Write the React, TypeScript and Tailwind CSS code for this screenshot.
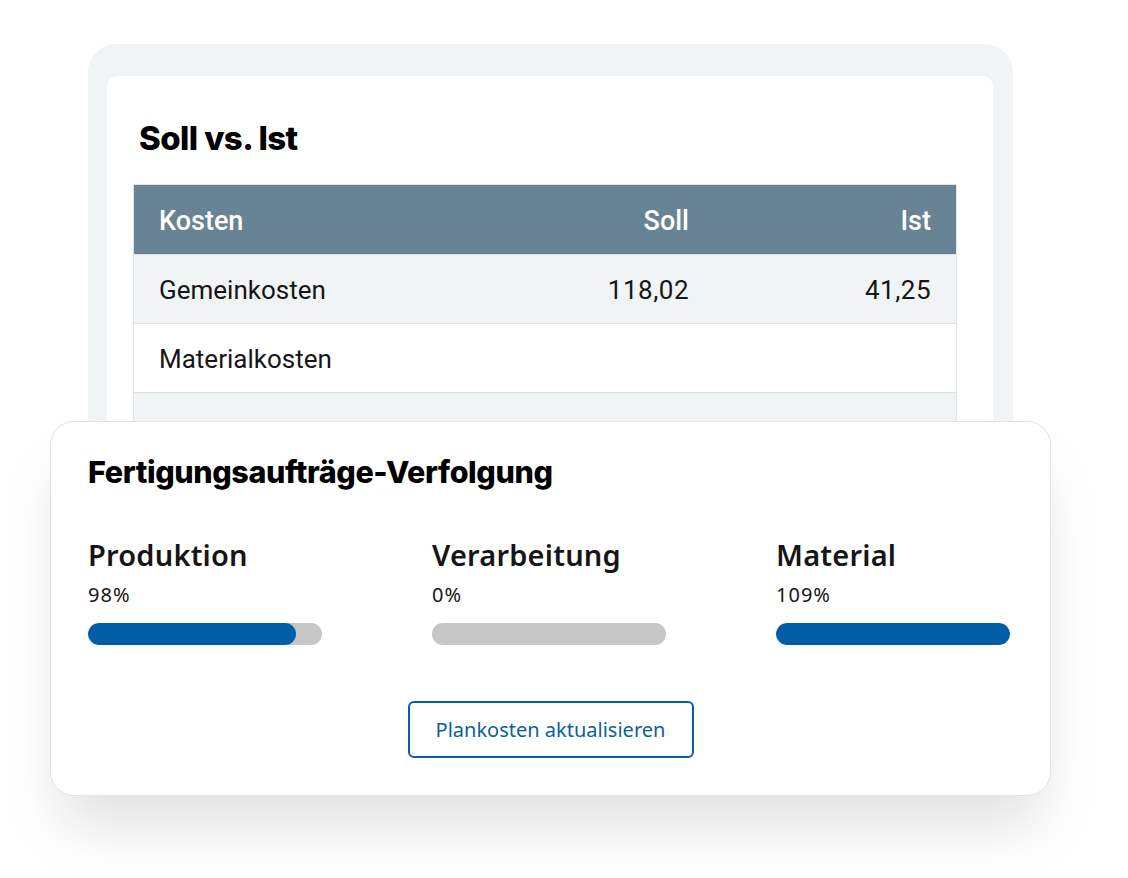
import React from 'react';

const rows = [
  { name: 'Gemeinkosten', soll: '118,02', ist: '41,25', shaded: true },
  { name: 'Materialkosten', soll: '', ist: '', shaded: false },
  { name: '', soll: '', ist: '', shaded: true },
];

const progress = [
  { label: 'Produktion', value: '98%', fill: 89 },
  { label: 'Verarbeitung', value: '0%', fill: 0 },
  { label: 'Material', value: '109%', fill: 100 },
];

const ProgressItem = ({ label, value, fill }: { label: string; value: string; fill: number }) => (
  <div className="w-[234px]">
    <div className="text-[29px] leading-[36px] font-semibold text-[#161616] tracking-[0.2px]">{label}</div>
    <div className="mt-[9px] text-[20px] leading-[26px] text-[#161616] tracking-[1px]">{value}</div>
    <div className="mt-[15px] h-[22px] w-full rounded-full bg-[#c6c6c6] overflow-hidden">
      <div className="h-full rounded-full bg-[#005ea8]" style={{ width: `${fill}%` }} />
    </div>
  </div>
);

export default function App() {
  return (
    <div className="relative h-[878px] w-full bg-white overflow-hidden" style={{ fontFamily: '"Noto Sans", Roboto, sans-serif' }}>
      {/* Hintergrund-Rahmen */}
      <div className="ml-[88px] mt-[44px] h-[700px] w-[925px] rounded-[28px] bg-[#f1f4f5] px-[19px] pt-[32px]">
        <div className="h-[640px] w-[886px] rounded-[10px] bg-white pl-[26px] pr-[36px] pt-[43px]">
          <h2 className="ml-[6px] text-[33px] leading-[38px] font-extrabold text-black tracking-[-0.6px]" style={{ fontFamily: 'Inter, sans-serif' }}>
            Soll vs. Ist
          </h2>
          <div className="mt-[27px] w-[824px] border border-[#dfe3e6]" style={{ fontFamily: 'Roboto, sans-serif' }}>
            <div className="grid h-[69px] grid-cols-[1fr_242px_242px] items-center bg-[#688393] px-[25px] pt-[4px] text-[27px] font-medium text-white">
              <div>Kosten</div>
              <div className="text-right">Soll</div>
              <div className="text-right">Ist</div>
            </div>
            {rows.map((r, i) => (
              <div
                key={i}
                className={`grid h-[69px] grid-cols-[1fr_242px_242px] items-center border-t border-[#dfe3e6] px-[25px] pt-[3px] text-[26px] text-[#161616] ${
                  r.shaded ? 'bg-[#f1f4f5]' : 'bg-white'
                }`}
              >
                <div>{r.name}</div>
                <div className="text-right tracking-[0.5px]">{r.soll}</div>
                <div className="text-right tracking-[0.5px]">{r.ist}</div>
              </div>
            ))}
          </div>
        </div>
      </div>

      {/* Vordere Karte */}
      <div className="absolute left-[50px] top-[421px] h-[375px] w-[1001px] rounded-[24px] border border-[#e2e2e2] bg-white pl-[37px] pt-[32px] shadow-[0_40px_60px_-10px_rgba(0,0,0,0.12)]">
        <h2 className="text-[30.5px] leading-[36px] font-extrabold text-black tracking-[-0.4px]" style={{ fontFamily: 'Inter, sans-serif' }}>
          Fertigungsaufträge-Verfolgung
        </h2>
        <div className="mt-[47px] flex gap-[110px]">
          {progress.map((p) => (
            <ProgressItem key={p.label} label={p.label} value={p.value} fill={p.fill} />
          ))}
        </div>
        <div className="mt-[56px] flex justify-center pr-[37px]">
          <button className="h-[57px] w-[286px] rounded-[6px] border-2 border-[#0a5fa3] bg-white text-[20px] text-[#0f5e9c]">
            Plankosten aktualisieren
          </button>
        </div>
      </div>
    </div>
  );
}
